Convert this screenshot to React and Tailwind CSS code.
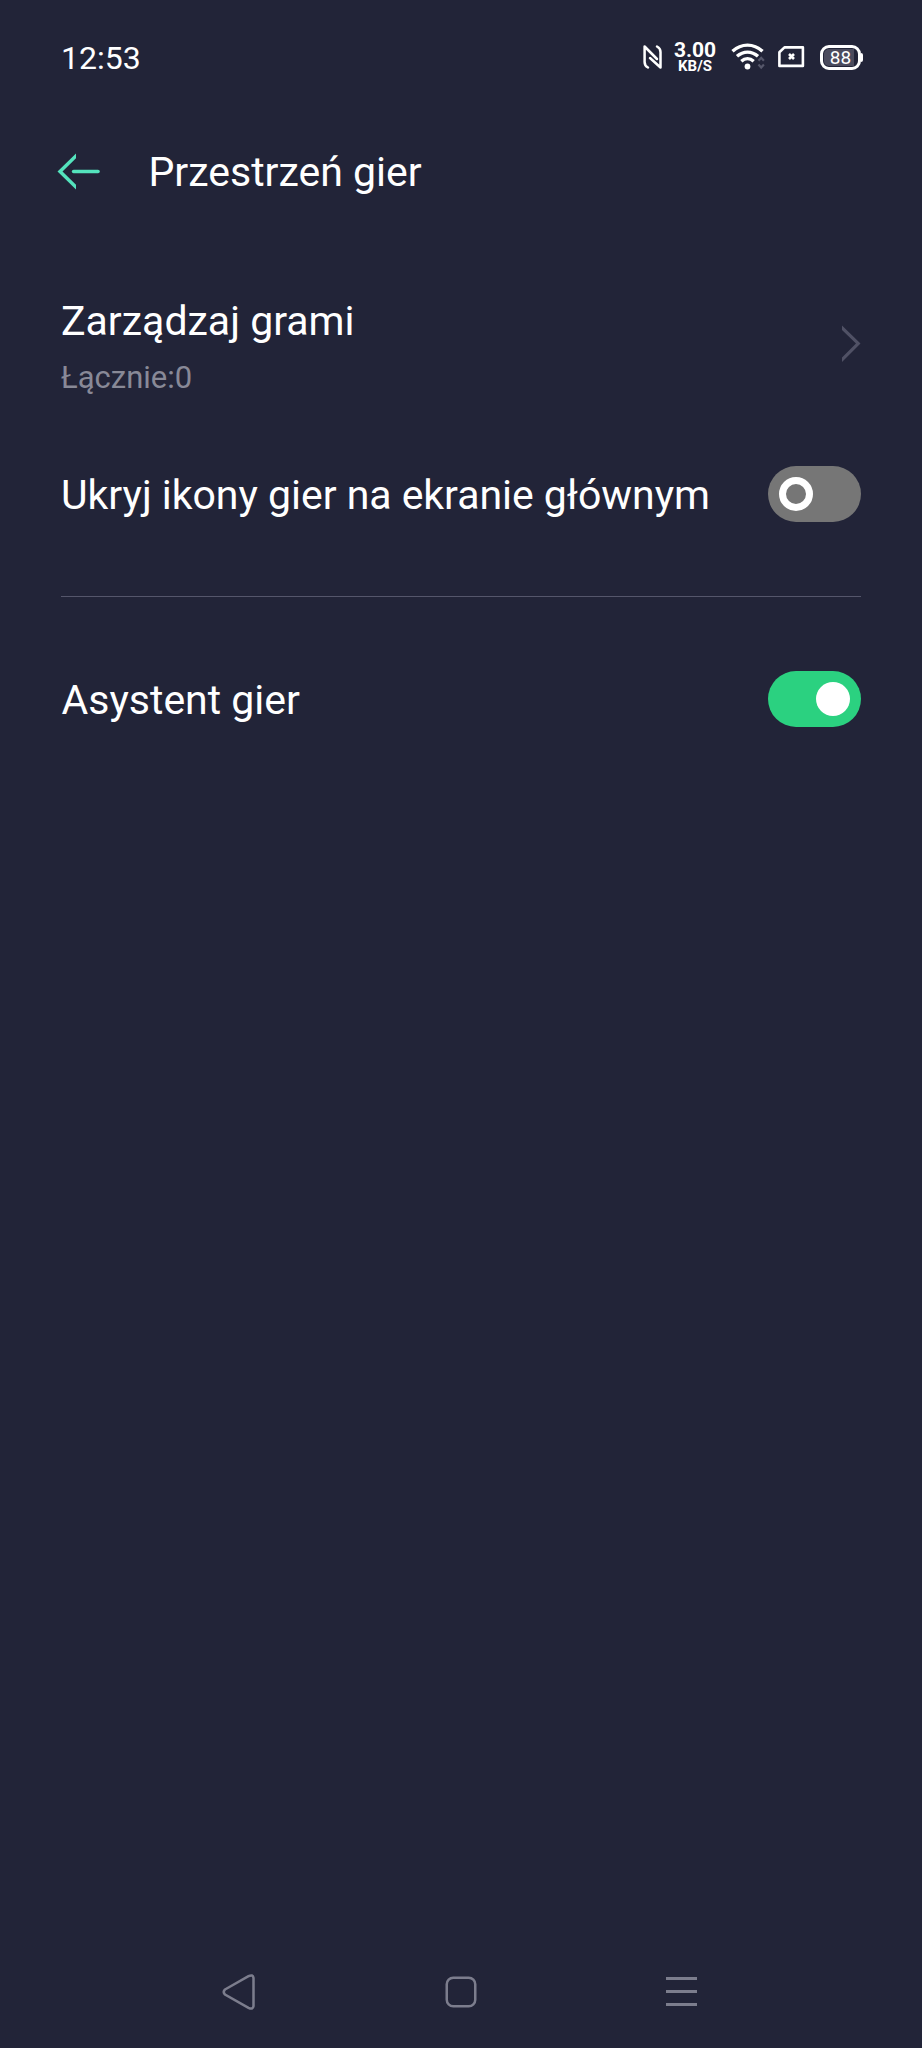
const NfcIcon = () => (
  <svg className="ml-[502px] h-[28px] w-[22px] shrink-0" viewBox="0 0 22 28" fill="none" stroke="#fff" strokeWidth="2.500" strokeLinecap="round" strokeLinejoin="round">
    <path d="M6 24.500C3 23 2.600 21.500 2.600 19V3.500L15 16" />
    <path d="M15 3.500C18 5 18.500 6.500 18.500 9V24.500L8 15" />
  </svg>
);

const WifiIcon = () => (
  <svg className="ml-[14px] h-[30px] w-[36px] shrink-0" viewBox="0 0 36 30" fill="none">
    <g stroke="#fff" strokeWidth="3.400">
      <path d="M1.500 9.200C10.500 1.100 22.500 1.100 31.500 9.200" />
      <path d="M6 14.300C12.500 8.700 20.500 8.700 27 14.300" />
      <path d="M10.300 19.200C14 16 19 16 22.700 19.200" />
    </g>
    <circle cx="16.500" cy="24.500" r="2.900" fill="#fff" />
    <path d="M27.500 18.800L30.200 15.800L32.900 18.800M27.500 22.500L30.200 25.500L32.900 22.500" stroke="#56576a" strokeWidth="2.200" />
  </svg>
);

const SimIcon = () => (
  <svg className="ml-[10px] h-[24px] w-[28px] shrink-0" viewBox="0 0 28 24" fill="none" stroke="#fff">
    <path d="M7.500 2.400H25.900V20.900H2.400V7.200Z" strokeWidth="2.600" strokeLinejoin="round" />
    <path d="M12 9L17 14M17 9L12 14" strokeWidth="2.600" />
  </svg>
);

const Battery = () => (
  <div className="ml-[15px] flex items-center">
    <div className="flex h-[25px] w-[41px] items-center rounded-[9px] border-3 border-white p-px">
      <div className="flex h-full w-[30px] items-center justify-center rounded-l-[5px] bg-[#4b4b5d] pt-px pl-[3px] text-[19px] leading-[18px] text-white">
        88
      </div>
    </div>
    <div className="h-[9px] w-[2px] rounded-r-sm bg-white" />
  </div>
);

const Switch = ({ on }) =>
  on ? (
    <div className="flex h-[56px] w-[93px] shrink-0 items-center justify-end rounded-full bg-[#2bd180] pr-[11px]">
      <div className="size-[34px] rounded-full bg-white" />
    </div>
  ) : (
    <div className="flex h-[56px] w-[93px] shrink-0 items-center rounded-full bg-[#767676] pl-[11px]">
      <div className="size-[34px] rounded-full border-[7px] border-white" />
    </div>
  );

export default function App() {
  return (
    <div className="flex h-[2048px] w-[922px] flex-col overflow-hidden bg-[#222438] font-['Roboto',sans-serif] text-[41px] leading-[48px] text-white">
      <div className="flex h-[114px] shrink-0 items-center pl-[61px]">
        <div className="w-[79px] pt-[2px] text-[32px] leading-[40px] whitespace-nowrap">12:53</div>
        <NfcIcon />
        <div className="ml-[9px] flex w-[44px] flex-col items-center font-bold">
          <span className="text-[21px] leading-[18px]">3.00</span>
          <span className="text-[15px] leading-[15px]">KB/S</span>
        </div>
        <WifiIcon />
        <SimIcon />
        <Battery />
      </div>

      <header className="flex h-[116px] shrink-0 items-center pl-[57px]">
        <svg className="h-[38px] w-[44px]" viewBox="0 0 44 38" fill="#54e3bd">
          <path d="M19 0.500V5.300L5.500 18.500L19 31.700V36.500L0.500 18.500Z" />
          <rect x="14.800" y="16.700" width="28" height="3.600" rx="1.800" />
        </svg>
        <h1 className="ml-[47.500px]">Przestrzeń gier</h1>
      </header>

      <main className="flex flex-1 flex-col px-[61px]">
        <div className="mt-[67px] flex h-[99px] items-start justify-between">
          <div>
            <div>Zarządzaj grami</div>
            <div className="mt-[15px] text-[31px] leading-[36px] text-[#888997]">Łącznie:0</div>
          </div>
          <svg className="mt-[28px] h-[38px] w-[20px]" viewBox="0 0 20 38" fill="#505165">
            <path d="M1 0.500L19.500 18.500L1 37V32.500L15 18.500L1 5Z" />
          </svg>
        </div>
        <div className="mt-[70px] flex h-[56px] items-center justify-between">
          <div className="pt-[2px] tracking-[-0.03px]">Ukryj ikony gier na ekranie głównym</div>
          <Switch />
        </div>
        <div className="mt-[74px] h-px bg-[#55566b]" />
        <div className="mt-[74px] flex h-[56px] items-center justify-between">
          <div className="pt-[2px] pl-[0.500px]">Asystent gier</div>
          <Switch on />
        </div>
      </main>

      <nav className="flex h-[114px] shrink-0 items-center pt-px pl-[221px]">
        <svg className="h-[38px] w-[36px]" viewBox="0 0 36 38" fill="none" stroke="#7c7d8d" strokeWidth="2.500">
          <path d="M4 16.500L27.500 3.200Q32 1 32.500 5V33Q32 37 27.500 34.800L4 21.500Q1.500 19 4 16.500Z" />
        </svg>
        <svg className="ml-[188px] size-[32px]" viewBox="0 0 32 32" fill="none" stroke="#7c7d8d" strokeWidth="2.500">
          <rect x="1.750" y="1.750" width="28.500" height="28.500" rx="6.500" />
        </svg>
        <div className="ml-[189px] flex w-[31px] flex-col gap-[10px]">
          <div className="h-[3px] bg-[#7c7d8d]" />
          <div className="h-[3px] bg-[#7c7d8d]" />
          <div className="h-[3px] bg-[#7c7d8d]" />
        </div>
      </nav>
    </div>
  );
}
